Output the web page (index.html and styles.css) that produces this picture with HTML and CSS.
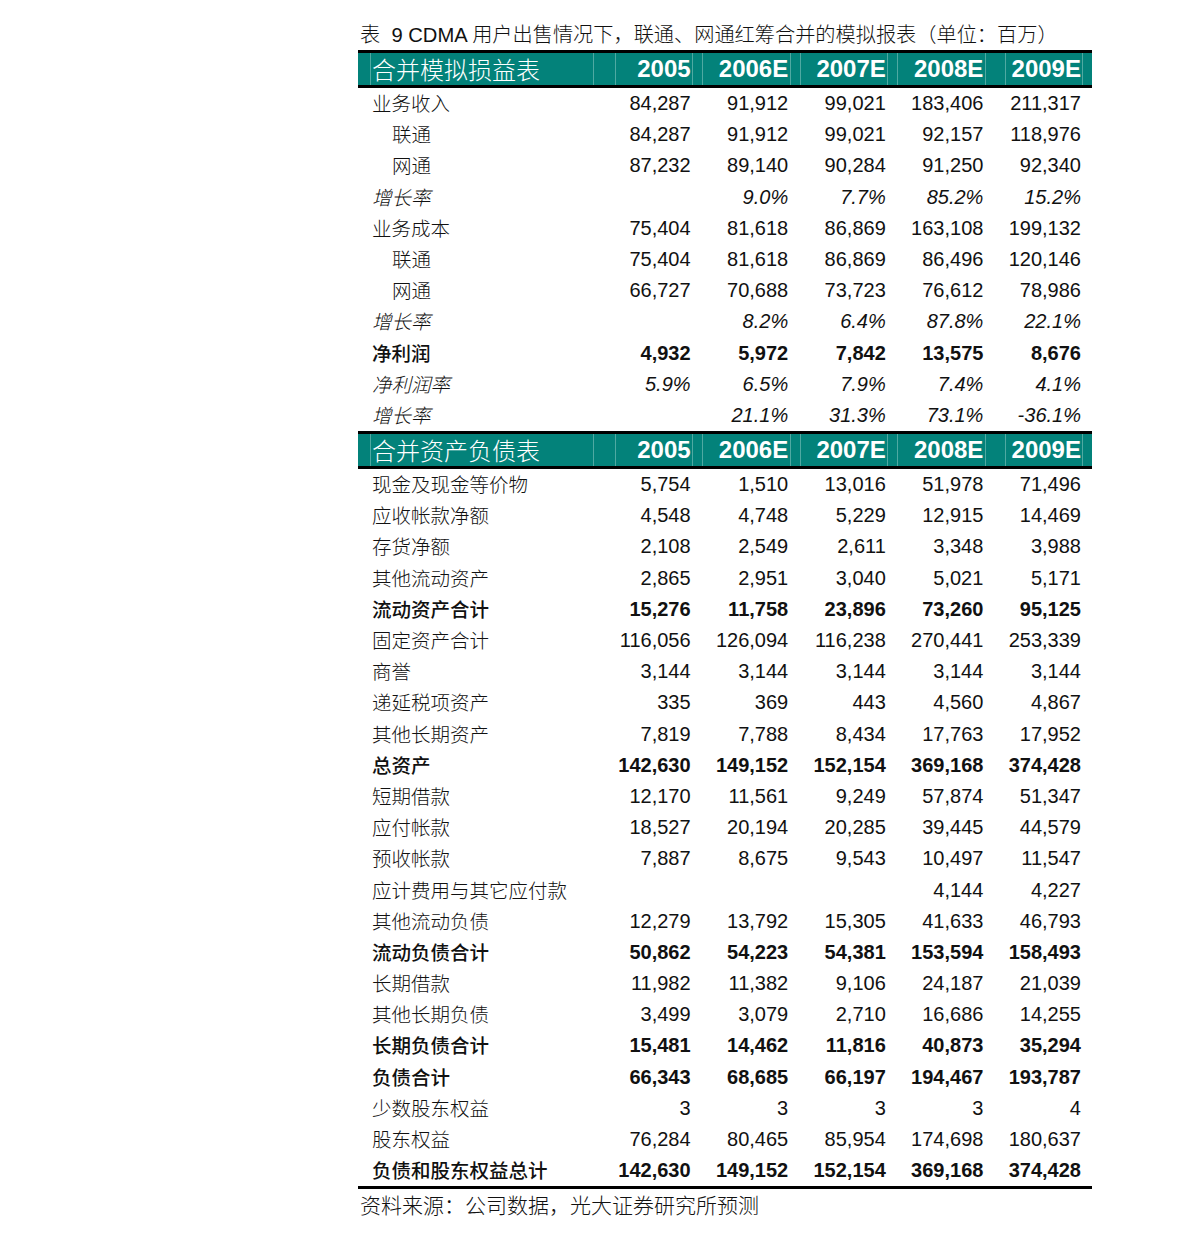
FILE: index.html
```html
<!DOCTYPE html>
<html lang="zh-CN">
<head>
<meta charset="utf-8">
<title>模拟报表</title>
<link rel="stylesheet" href="styles.css">
</head>
<body>
<div class="sheet">
  <div class="title">表&nbsp; 9 CDMA 用户出售情况下，联通、网通红筹合并的模拟报表（单位：百万）</div>

  <div class="row head">
    <div class="lab">合并模拟损益表</div><div>2005</div><div>2006E</div><div>2007E</div><div>2008E</div><div>2009E</div><div></div>
  </div>
  <div class="row"><div class="lab">业务收入</div><div>84,287</div><div>91,912</div><div>99,021</div><div>183,406</div><div>211,317</div><div></div></div>
  <div class="row"><div class="lab sub">联通</div><div>84,287</div><div>91,912</div><div>99,021</div><div>92,157</div><div>118,976</div><div></div></div>
  <div class="row"><div class="lab sub">网通</div><div>87,232</div><div>89,140</div><div>90,284</div><div>91,250</div><div>92,340</div><div></div></div>
  <div class="row it"><div class="lab">增长率</div><div></div><div>9.0%</div><div>7.7%</div><div>85.2%</div><div>15.2%</div><div></div></div>
  <div class="row"><div class="lab">业务成本</div><div>75,404</div><div>81,618</div><div>86,869</div><div>163,108</div><div>199,132</div><div></div></div>
  <div class="row"><div class="lab sub">联通</div><div>75,404</div><div>81,618</div><div>86,869</div><div>86,496</div><div>120,146</div><div></div></div>
  <div class="row"><div class="lab sub">网通</div><div>66,727</div><div>70,688</div><div>73,723</div><div>76,612</div><div>78,986</div><div></div></div>
  <div class="row it"><div class="lab">增长率</div><div></div><div>8.2%</div><div>6.4%</div><div>87.8%</div><div>22.1%</div><div></div></div>
  <div class="row b"><div class="lab">净利润</div><div>4,932</div><div>5,972</div><div>7,842</div><div>13,575</div><div>8,676</div><div></div></div>
  <div class="row it"><div class="lab">净利润率</div><div>5.9%</div><div>6.5%</div><div>7.9%</div><div>7.4%</div><div>4.1%</div><div></div></div>
  <div class="row it"><div class="lab">增长率</div><div></div><div>21.1%</div><div>31.3%</div><div>73.1%</div><div>-36.1%</div><div></div></div>

  <div class="row head">
    <div class="lab">合并资产负债表</div><div>2005</div><div>2006E</div><div>2007E</div><div>2008E</div><div>2009E</div><div></div>
  </div>
  <div class="row"><div class="lab">现金及现金等价物</div><div>5,754</div><div>1,510</div><div>13,016</div><div>51,978</div><div>71,496</div><div></div></div>
  <div class="row"><div class="lab">应收帐款净额</div><div>4,548</div><div>4,748</div><div>5,229</div><div>12,915</div><div>14,469</div><div></div></div>
  <div class="row"><div class="lab">存货净额</div><div>2,108</div><div>2,549</div><div>2,611</div><div>3,348</div><div>3,988</div><div></div></div>
  <div class="row"><div class="lab">其他流动资产</div><div>2,865</div><div>2,951</div><div>3,040</div><div>5,021</div><div>5,171</div><div></div></div>
  <div class="row b"><div class="lab">流动资产合计</div><div>15,276</div><div>11,758</div><div>23,896</div><div>73,260</div><div>95,125</div><div></div></div>
  <div class="row"><div class="lab">固定资产合计</div><div>116,056</div><div>126,094</div><div>116,238</div><div>270,441</div><div>253,339</div><div></div></div>
  <div class="row"><div class="lab">商誉</div><div>3,144</div><div>3,144</div><div>3,144</div><div>3,144</div><div>3,144</div><div></div></div>
  <div class="row"><div class="lab">递延税项资产</div><div>335</div><div>369</div><div>443</div><div>4,560</div><div>4,867</div><div></div></div>
  <div class="row"><div class="lab">其他长期资产</div><div>7,819</div><div>7,788</div><div>8,434</div><div>17,763</div><div>17,952</div><div></div></div>
  <div class="row b"><div class="lab">总资产</div><div>142,630</div><div>149,152</div><div>152,154</div><div>369,168</div><div>374,428</div><div></div></div>
  <div class="row"><div class="lab">短期借款</div><div>12,170</div><div>11,561</div><div>9,249</div><div>57,874</div><div>51,347</div><div></div></div>
  <div class="row"><div class="lab">应付帐款</div><div>18,527</div><div>20,194</div><div>20,285</div><div>39,445</div><div>44,579</div><div></div></div>
  <div class="row"><div class="lab">预收帐款</div><div>7,887</div><div>8,675</div><div>9,543</div><div>10,497</div><div>11,547</div><div></div></div>
  <div class="row"><div class="lab">应计费用与其它应付款</div><div></div><div></div><div></div><div>4,144</div><div>4,227</div><div></div></div>
  <div class="row"><div class="lab">其他流动负债</div><div>12,279</div><div>13,792</div><div>15,305</div><div>41,633</div><div>46,793</div><div></div></div>
  <div class="row b"><div class="lab">流动负债合计</div><div>50,862</div><div>54,223</div><div>54,381</div><div>153,594</div><div>158,493</div><div></div></div>
  <div class="row"><div class="lab">长期借款</div><div>11,982</div><div>11,382</div><div>9,106</div><div>24,187</div><div>21,039</div><div></div></div>
  <div class="row"><div class="lab">其他长期负债</div><div>3,499</div><div>3,079</div><div>2,710</div><div>16,686</div><div>14,255</div><div></div></div>
  <div class="row b"><div class="lab">长期负债合计</div><div>15,481</div><div>14,462</div><div>11,816</div><div>40,873</div><div>35,294</div><div></div></div>
  <div class="row b"><div class="lab">负债合计</div><div>66,343</div><div>68,685</div><div>66,197</div><div>194,467</div><div>193,787</div><div></div></div>
  <div class="row"><div class="lab">少数股东权益</div><div>3</div><div>3</div><div>3</div><div>3</div><div>4</div><div></div></div>
  <div class="row"><div class="lab">股东权益</div><div>76,284</div><div>80,465</div><div>85,954</div><div>174,698</div><div>180,637</div><div></div></div>
  <div class="row b last"><div class="lab">负债和股东权益总计</div><div>142,630</div><div>149,152</div><div>152,154</div><div>369,168</div><div>374,428</div><div></div></div>

  <div class="source">资料来源：公司数据，光大证券研究所预测</div>
</div>
</body>
</html>
```

FILE: styles.css
```css
html, body {
  margin: 0;
  padding: 0;
  background: #ffffff;
}

body {
  font-family: "Liberation Sans", Arial, "Noto Sans CJK SC", sans-serif;
  color: #111111;
}

.sheet {
  width: 734px;
  margin-left: 358px;
  padding-top: 23px;
}

.title {
  font-family: "Liberation Sans", "Noto Sans CJK SC", sans-serif;
  font-size: 20.2px;
  font-weight: 300;
  line-height: 24px;
  height: 24px;
  margin-bottom: 3px;
  padding-left: 2px;
  white-space: nowrap;
}

.row {
  display: grid;
  grid-template-columns: 236px repeat(5, 97.6px) 10px;
  height: 31.2px;
  line-height: 30px;
  font-size: 20px;
}

.row > div {
  text-align: right;
  padding-right: 1px;
  white-space: nowrap;
}

.row > .lab {
  text-align: left;
  padding-left: 14px;
  font-family: "Noto Sans CJK SC", sans-serif;
  font-size: 19.5px;
  font-weight: 300;
}

.row > .lab.sub {
  padding-left: 34px;
}

.it > div {
  font-style: italic;
}

.b > div {
  font-weight: bold;
}

.b > .lab {
  font-weight: 500;
}

.head {
  height: 32px;
  line-height: 32px;
  border-top: 3px solid #000000;
  border-bottom: 3px solid #000000;
  background-color: #03827a;
  background-image:
    linear-gradient(#4fa9a2, #4fa9a2),
    linear-gradient(#4fa9a2, #4fa9a2),
    linear-gradient(#4fa9a2, #4fa9a2),
    linear-gradient(#4fa9a2, #4fa9a2),
    linear-gradient(#4fa9a2, #4fa9a2),
    linear-gradient(#4fa9a2, #4fa9a2),
    linear-gradient(#4fa9a2, #4fa9a2),
    linear-gradient(#4fa9a2, #4fa9a2),
    linear-gradient(#4fa9a2, #4fa9a2),
    linear-gradient(#4fa9a2, #4fa9a2),
    linear-gradient(#4fa9a2, #4fa9a2),
    linear-gradient(#4fa9a2, #4fa9a2);
  background-repeat: no-repeat;
  background-size: 1px 100%;
  background-position:
    12px 0, 235px 0, 257px 0, 334px 0, 344px 0, 432px 0,
    442px 0, 529px 0, 539px 0, 627px 0, 647px 0, 724px 0;
  color: #ffffff;
}

.head > div {
  font-weight: bold;
  font-size: 24px;
  padding-right: 1px;
}

.head > .lab {
  font-weight: 300;
  font-size: 24px;
  padding-left: 14px;
}

.last {
  border-bottom: 3px solid #000000;
}

.source {
  font-family: "Noto Sans CJK SC", sans-serif;
  font-size: 21px;
  font-weight: 300;
  line-height: 30px;
  padding-left: 2px;
  white-space: nowrap;
}
```
